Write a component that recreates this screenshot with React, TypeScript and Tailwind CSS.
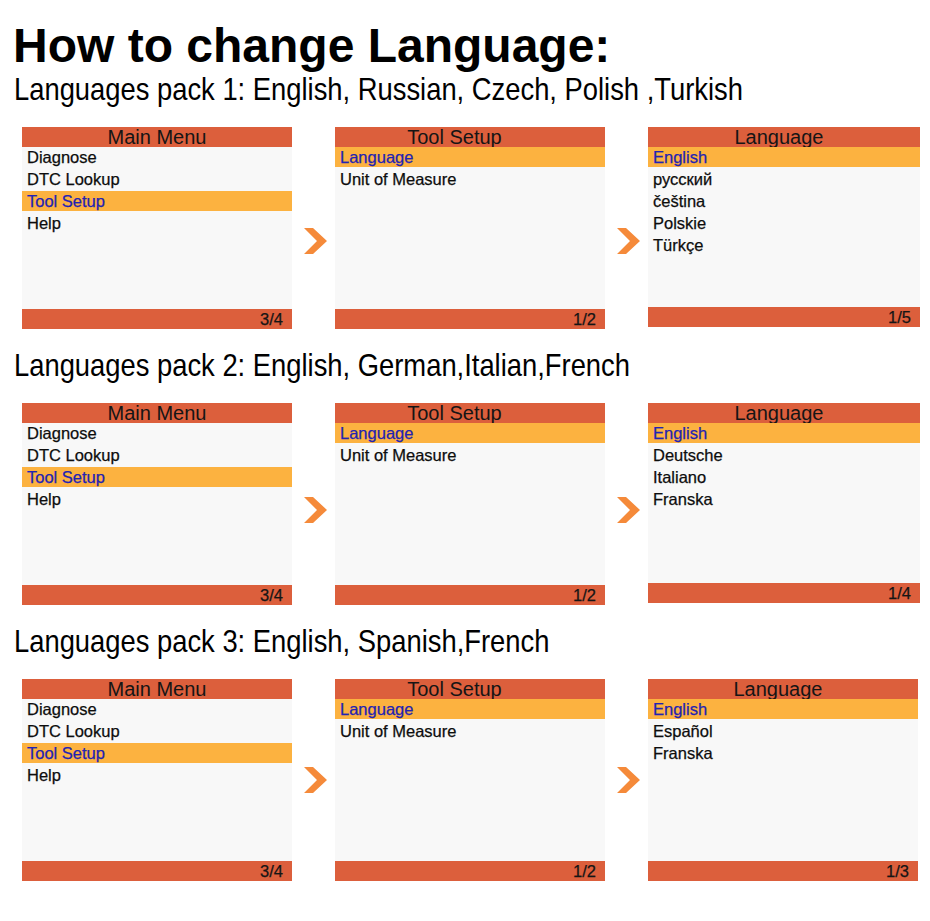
import React from "react";

type Screen = {
  title: string;
  titlePad: string; // the device draws some titles a little left of centre
  items: string[];
  selected: number;
  page: string;
};

type Pack = {
  label: string;
  arrowTop: string; // mt-[..] for the chevrons in this row
  lastWide: boolean;
  lastShort: boolean;
  screens: Screen[];
};

const mainMenu: Screen = {
  title: "Main Menu",
  titlePad: "pr-0",
  items: ["Diagnose", "DTC Lookup", "Tool Setup", "Help"],
  selected: 2,
  page: "3/4",
};

const toolSetup: Screen = {
  title: "Tool Setup",
  titlePad: "pr-[31px]",
  items: ["Language", "Unit of Measure"],
  selected: 0,
  page: "1/2",
};

const packs: Pack[] = [
  {
    label: "Languages pack 1: English, Russian, Czech, Polish ,Turkish",
    arrowTop: "mt-[101px]",
    lastWide: true,
    lastShort: true,
    screens: [
      mainMenu,
      toolSetup,
      {
        title: "Language",
        titlePad: "pr-[10px]",
        items: ["English", "русский", "čeština", "Polskie", "Türkçe"],
        selected: 0,
        page: "1/5",
      },
    ],
  },
  {
    label: "Languages pack 2: English, German,Italian,French",
    arrowTop: "mt-[94px]",
    lastWide: true,
    lastShort: true,
    screens: [
      mainMenu,
      toolSetup,
      {
        title: "Language",
        titlePad: "pr-[10px]",
        items: ["English", "Deutsche", "Italiano", "Franska"],
        selected: 0,
        page: "1/4",
      },
    ],
  },
  {
    label: "Languages pack 3: English, Spanish,French",
    arrowTop: "mt-[88px]",
    lastWide: false,
    lastShort: false,
    screens: [
      mainMenu,
      toolSetup,
      {
        title: "Language",
        titlePad: "pr-[10px]",
        items: ["English", "Español", "Franska"],
        selected: 0,
        page: "1/3",
      },
    ],
  },
];

function Chevron({ top }: { top: string }) {
  return (
    <div className={`w-[43px] shrink-0 pl-[12px] ${top}`}>
      <svg width="24" height="26" viewBox="0 0 24 26">
        <polygon points="0,0 9,0 23,13 9,26 0,26 13,13" fill="#f58a3a" />
      </svg>
    </div>
  );
}

function DeviceScreen({ screen, wide, short }: { screen: Screen; wide?: boolean; short?: boolean }) {
  return (
    <div className={`flex shrink-0 flex-col bg-[#f8f8f8] ${wide ? "w-[272px]" : "w-[270px]"} ${short ? "h-[200px]" : "h-[202px]"}`}>
      {/* title bar */}
      <div className={`h-[20px] bg-[#dc5f3c] text-center text-[20px] leading-[20px] text-[#151515] ${screen.titlePad}`}>
        {screen.title}
      </div>

      <div className="flex-1">
        {screen.items.map((item, i) => (
          <div key={item} className="h-[22px]">
            <div
              className={`h-[20px] pl-[5px] text-[16.5px] leading-[20px] [-webkit-text-stroke:0.25px_currentColor] ${
                i === screen.selected ? "bg-[#fcb240] text-[#2222b4]" : "text-[#0d0d0d]"
              }`}
            >
              {item}
            </div>
          </div>
        ))}
      </div>

      {/* status bar */}
      <div className="h-[20px] bg-[#dc5f3c] pr-[9px] text-right text-[16.5px] leading-[20px] text-[#151515] [-webkit-text-stroke:0.25px_currentColor]">
        {screen.page}
      </div>
    </div>
  );
}

export default function App() {
  return (
    <div
      className="h-[921px] w-[930px] overflow-hidden bg-white pt-[22px] text-black"
      style={{ fontFamily: '"Liberation Sans", Arial, sans-serif' }}
    >
      <h1 className="pl-[13px] text-[48px] font-bold leading-[48px]">How to change Language:</h1>

      {packs.map((pack, idx) => (
        <section key={idx} className={idx === 0 ? "mt-[3px]" : "mt-[20px]"}>
          {/* no narrow face installed, so squeeze the regular one */}
          <p className="h-[32px] pl-[14px] text-[32px] leading-[32px] whitespace-nowrap">
            <span className="inline-block origin-left scale-x-[0.855]">{pack.label}</span>
          </p>

          <div className="mt-[22px] flex items-start pl-[22px]">
            <DeviceScreen screen={pack.screens[0]} />
            <Chevron top={pack.arrowTop} />
            <DeviceScreen screen={pack.screens[1]} />
            <Chevron top={pack.arrowTop} />
            <DeviceScreen screen={pack.screens[2]} wide={pack.lastWide} short={pack.lastShort} />
          </div>
        </section>
      ))}
    </div>
  );
}
